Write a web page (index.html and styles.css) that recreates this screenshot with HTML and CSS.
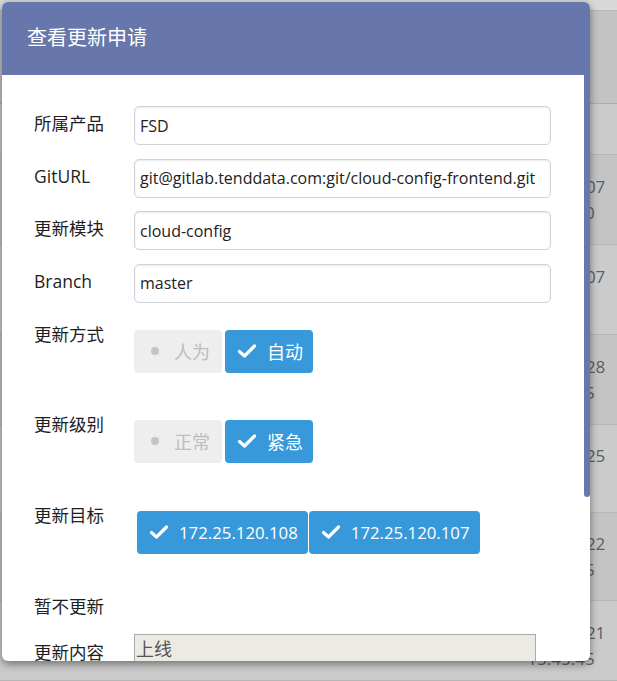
FILE: index.html
```html
<!DOCTYPE html>
<html lang="zh-CN">
<head>
<meta charset="utf-8">
<title>查看更新申请</title>
<link rel="stylesheet" href="styles.css">
</head>
<body>
<div class="page">
  <div class="bg-table">
    <div class="t-top"></div>
    <div class="t-head"></div>
    <div class="t-row light r1"><div class="cell"></div></div>
    <div class="t-row dark r2"><div class="cell"><span>2017-06-07</span><span>10:52:30</span></div></div>
    <div class="t-row light r2"><div class="cell"><span>2017-06-07</span><span>9:11:21</span></div></div>
    <div class="t-row dark r2"><div class="cell"><span>2017-05-28</span><span>16:30:45</span></div></div>
    <div class="t-row light r3"><div class="cell"><span>2017-05-25</span><span>9:20:11</span></div></div>
    <div class="t-row dark r3"><div class="cell"><span>2017-05-22</span><span>09:41:15</span></div></div>
    <div class="t-row light r2"><div class="cell"><span>2017-05-21</span><span>15:45:45</span></div></div>
  </div>

  <div class="modal">
    <div class="modal-header">
      <h4 class="modal-title">查看更新申请</h4>
    </div>
    <div class="modal-body">
      <div class="form-row">
        <label class="form-label">所属产品</label>
        <input class="form-input" type="text" value="FSD">
      </div>
      <div class="form-row">
        <label class="form-label">GitURL</label>
        <input class="form-input" type="text" value="git@gitlab.tenddata.com:git/cloud-config-frontend.git">
      </div>
      <div class="form-row">
        <label class="form-label">更新模块</label>
        <input class="form-input" type="text" value="cloud-config">
      </div>
      <div class="form-row">
        <label class="form-label">Branch</label>
        <input class="form-input" type="text" value="master">
      </div>

      <div class="form-row choice-row">
        <label class="form-label">更新方式</label>
        <div class="btn-group">
          <span class="opt off"><span class="ico"><span class="dot"></span></span>人为</span>
          <span class="opt on"><span class="ico"><svg viewBox="0 0 20 16" width="20" height="16"><path d="M2.5 8.5 L7.5 13 L17.5 3" fill="none" stroke="#fff" stroke-width="3.2" stroke-linecap="round" stroke-linejoin="round"/></svg></span>自动</span>
        </div>
      </div>

      <div class="form-row choice-row">
        <label class="form-label">更新级别</label>
        <div class="btn-group">
          <span class="opt off"><span class="ico"><span class="dot"></span></span>正常</span>
          <span class="opt on"><span class="ico"><svg viewBox="0 0 20 16" width="20" height="16"><path d="M2.5 8.5 L7.5 13 L17.5 3" fill="none" stroke="#fff" stroke-width="3.2" stroke-linecap="round" stroke-linejoin="round"/></svg></span>紧急</span>
        </div>
      </div>

      <div class="form-row choice-row">
        <label class="form-label">更新目标</label>
        <div class="btn-group targets">
          <span class="opt on ip"><span class="ico"><svg viewBox="0 0 20 16" width="20" height="16"><path d="M2.5 8.5 L7.5 13 L17.5 3" fill="none" stroke="#fff" stroke-width="3.2" stroke-linecap="round" stroke-linejoin="round"/></svg></span>172.25.120.108</span>
          <span class="opt on ip"><span class="ico"><svg viewBox="0 0 20 16" width="20" height="16"><path d="M2.5 8.5 L7.5 13 L17.5 3" fill="none" stroke="#fff" stroke-width="3.2" stroke-linecap="round" stroke-linejoin="round"/></svg></span>172.25.120.107</span>
        </div>
      </div>

      <div class="form-row empty-row">
        <label class="form-label">暂不更新</label>
      </div>

      <div class="form-row text-row">
        <label class="form-label">更新内容</label>
        <textarea class="form-textarea" readonly>上线</textarea>
      </div>
    </div>
    <div class="scroll-thumb"></div>
  </div>
</div>
</body>
</html>
```

FILE: styles.css
```css
* { box-sizing: border-box; }
html, body { margin: 0; padding: 0; }
body {
  width: 617px;
  height: 681px;
  overflow: hidden;
  background: #c9c9c9;
  font-family: "Open Sans", "Noto Sans CJK SC", sans-serif;
}
.page {
  position: relative;
  width: 617px;
  height: 681px;
}

/* dimmed background table */
.bg-table {
  display: flex;
  flex-direction: column;
  width: 617px;
  height: 681px;
}
.t-top {
  height: 11px;
  background: #d8d8d8;
  border-bottom: 1px solid #b9b9b9;
}
.t-head {
  height: 93px;
  background: #c3c3c3;
  border-bottom: 1px solid #acacac;
}
.t-row {
  display: flex;
  justify-content: flex-end;
  align-items: center;
  border-bottom: 1px solid #b7b7b7;
}
.t-row.light { background: #cbcbcb; }
.t-row.dark { background: #c4c4c4; }
.r1 { height: 51px; }
.r2 { height: 90px; }
.r3 { height: 88px; }
.t-row:last-child { flex: 1; align-items: flex-start; padding-top: 19px; }
.cell {
  width: 100px;
  margin-right: 6px;
  display: flex;
  flex-direction: column;
  align-items: center;
  color: #5b5f66;
  font-size: 17px;
  line-height: 26px;
  white-space: nowrap;
}

/* modal */
.modal {
  position: absolute;
  left: 2px;
  top: 2px;
  width: 588px;
  height: 659px;
  background: #fff;
  border-radius: 6px;
  overflow: hidden;
  box-shadow: 0 3px 9px rgba(0, 0, 0, 0.45);
  display: flex;
  flex-direction: column;
}
.modal-header {
  height: 73px;
  flex: none;
  background: #6777ab;
  display: flex;
  align-items: center;
  padding-left: 25px;
}
.modal-title {
  margin: 0;
  color: #fff;
  font-size: 20px;
  font-weight: 400;
  line-height: 24px;
  padding-bottom: 2px;
}
.modal-body {
  flex: 1;
  overflow: hidden;
  padding: 31px 39px 0 32px;
}
.scroll-thumb {
  position: absolute;
  right: 0;
  top: 73px;
  width: 6px;
  height: 422px;
  background: #6777ab;
  border-radius: 0 0 3px 3px;
}

.form-row {
  display: flex;
  align-items: flex-start;
}
.form-label {
  width: 100px;
  flex: none;
  padding-top: 6px;
  font-size: 17.5px;
  line-height: 22px;
  color: #1e1e24;
}
.form-input {
  flex: 1;
  height: 39px;
  margin: 0 0 13.67px;
  padding: 0 5px;
  border: 1px solid #cfd2d6;
  border-radius: 5px;
  box-shadow: inset 0 1px 2px rgba(0, 0, 0, 0.09);
  font-family: "Open Sans", "Noto Sans CJK SC", sans-serif;
  font-size: 16px;
  color: #222;
  background: #fff;
  outline: none;
}

.choice-row { height: 90px; }
.choice-row + .choice-row { height: 91px; }
.btn-group {
  display: flex;
  gap: 3px;
  margin-top: 13px;
}
.btn-group.targets { gap: 1px; margin-left: 3px; }
.opt {
  display: flex;
  align-items: center;
  height: 43px;
  padding: 0 12px;
  border-radius: 4px;
  font-size: 18px;
  white-space: nowrap;
}
.opt .ico {
  width: 20px;
  height: 16px;
  margin-right: 10px;
  display: flex;
  align-items: center;
  justify-content: center;
}
.opt svg { display: block; }
.opt.off { background: #eeeeee; color: #bdbdbd; width: 88px; }
.opt.on { background: #3799da; color: #fff; width: 88px; }
.opt.ip { width: auto; font-size: 16.8px; padding-right: 10px; }
.dot {
  width: 8px;
  height: 8px;
  border-radius: 50%;
  background: #c4c4c4;
}

.empty-row { height: 45px; }
.text-row { align-items: flex-start; }
.text-row .form-label { padding-top: 7px; }
.form-textarea {
  width: 402px;
  height: 110px;
  margin: 0;
  padding: 0 1px;
  border: 1px solid #a9a9a9;
  background: #ebebe4;
  color: #555;
  font-family: "Noto Sans CJK SC", sans-serif;
  font-size: 18px;
  line-height: 26px;
  resize: none;
  outline: none;
}
```
